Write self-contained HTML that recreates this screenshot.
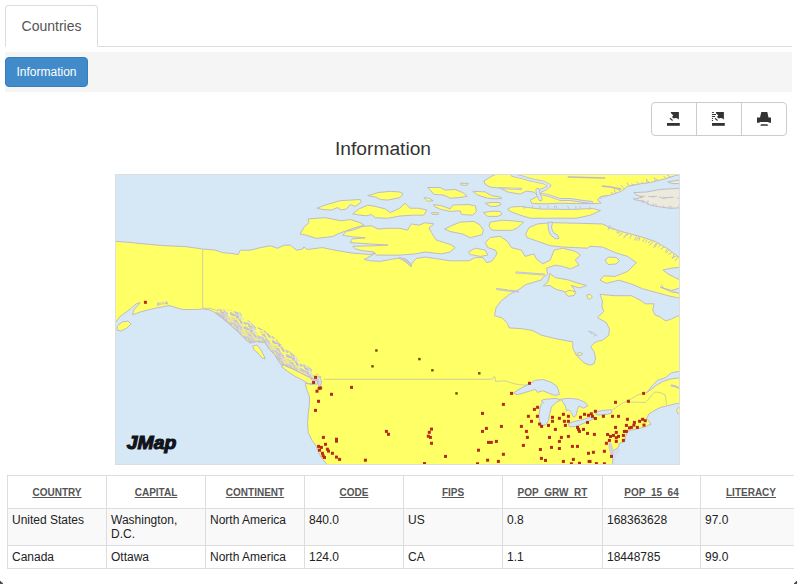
<!DOCTYPE html>
<html lang="en">
<head>
<meta charset="utf-8">
<title>Countries</title>
<style>
*{box-sizing:border-box}
html,body{margin:0;padding:0;background:#fff}
body{width:797px;height:584px;position:relative;overflow:hidden;font-family:"Liberation Sans",Arial,Helvetica,sans-serif;font-size:14px;line-height:20px;color:#333}
.tabline{position:absolute;left:5px;top:46px;width:787px;height:1px;background:#ddd}
.tab{position:absolute;left:5px;top:5px;width:93px;height:42px;border:1px solid #ddd;border-bottom-color:#fff;border-radius:4px 4px 0 0;background:#fff;color:#555;text-align:center;padding-top:10px;font-size:14px;line-height:20px}
.bar{position:absolute;left:5px;top:52px;width:787px;height:40px;background:#f5f5f5}
.btn-info{position:absolute;left:5px;top:57px;width:83px;height:30px;background:#428bca;border:1px solid #357ebd;border-radius:4px;color:#fff;font-size:12px;line-height:18px;padding-top:5px;text-align:center}
.grp{position:absolute;left:651px;top:102px;width:136px;height:34px;border:1px solid #ccc;border-radius:4px;background:#fff}
.grp i{position:absolute;top:0;width:1px;height:32px;background:#ccc}
.title{position:absolute;left:283px;top:137px;width:200px;text-align:center;font-size:19.2px;line-height:24px;color:#333;white-space:nowrap}
.map{position:absolute;left:115px;top:174px;width:565px;height:291px;border:1px solid #ddd;background:#d7e9f7;overflow:hidden}
.map svg{position:absolute;left:0;top:0}
.tw{position:absolute;left:7px;top:475px;width:787px;height:100px;overflow:hidden}
.tw table{position:absolute;left:0;top:0}
table{border-collapse:collapse;width:795px;table-layout:fixed;font-size:12px;line-height:14px;color:#222}
th,td{border:1px solid #ddd;padding:4px;vertical-align:top;text-align:left;overflow:hidden}
th{height:33px;padding-top:2px !important;font-size:10px;font-weight:bold;color:#555;text-decoration:underline;text-align:center;vertical-align:middle;padding:0}
tr.odd td{background:#f9f9f9}
.c1,.c2{position:absolute;bottom:0;width:3px;height:3px;overflow:hidden}
.c1{left:0}.c2{right:0}
.c1:before,.c2:before{content:"";position:absolute;width:12px;height:12px;border-radius:6px;box-shadow:0 0 0 6px #4a4d52;}
.c1:before{left:0;top:-9px}.c2:before{right:0;top:-9px}
</style>
</head>
<body>
<div class="tabline"></div>
<div class="tab">Countries</div>
<div class="bar"></div>
<div class="btn-info">Information</div>
<div class="grp"><i style="left:44px"></i><i style="left:89px"></i>
<svg width="134" height="32" viewBox="652 103 134 32" style="position:absolute;left:0;top:0">
<g fill="#333">
<rect x="667" y="123" width="12.8" height="2.8"/>
<polygon points="670.7,112 678.9,112 678.9,119.6 677.1,118.2 675.2,118 673.7,118.5 672,116.9 673.3,115.2 671.4,113.7"/>
<line x1="669.9" y1="118.3" x2="672.6" y2="120.5" stroke="#333" stroke-width="1.1"/>
<rect x="712" y="123" width="12.8" height="2.8"/>
<polygon points="715.7,112 723.9,112 723.9,119.6 722.1,118.2 720.2,118 718.7,118.5 717,116.9 718.3,115.2 716.4,113.7"/>
<line x1="714.9" y1="118.3" x2="717.6" y2="120.5" stroke="#333" stroke-width="1.1"/>
<rect x="711.9" y="112" width="2.1" height="0.9"/><rect x="711.9" y="114" width="4.1" height="1"/><rect x="711.9" y="116" width="3.2" height="1"/><rect x="711.9" y="118" width="1.1" height="1"/><rect x="711.9" y="120" width="1.1" height="1"/>
<polygon points="761.3,112 767.3,112 768.5,117.5 771,117.5 771,122.8 768.6,122.8 768.6,121.9 759.6,121.9 759.6,122.8 757,122.8 757,117.5 760,117.5"/>
<polygon points="761,124.3 767.4,124.3 768.2,125.8 760.3,125.8"/>
</g></svg>
</div>
<div class="title">Information</div>
<div class="map">
<svg width="563" height="289" viewBox="116 175 563 289"><rect x="110" y="170" width="580" height="300" fill="#d6e8f6"/>
<polygon points="110,241.4 116,241.4 130,242.4 145,244 165,245.7 185,246.5 202.5,249 215,250 222.5,252.7 231.3,253.4 238.2,254.6 240.1,250.2
250.1,250.2 260.2,247.7 270.2,245.8 277.7,248.3 284,245.2 290.3,245.2 296.6,250.2 302.8,249 303.8,247 307.5,249.5 315,248.5
322.6,247.6 331.4,249.5 341.4,251.3 352.7,253.2 362.7,253.9 370.3,254.5 375.3,253.2 367.8,257.6 364,259.5 370.3,260.8 380.3,261.4
390.3,259.5 400,258 406,259 409,262 411,265 413,262 416.3,258.5 425.1,257 437.6,258.9 450.2,260.8 469,260.8 475.3,257.6 482.8,257.6
486.6,262.6 491.6,261.4 495.4,256.4 497,253 495.4,250.1 487.8,247.6 485.3,242.6 490.3,237.5 500,236.3 507.5,241.3 511.3,247.6
521.3,250.1 525.1,256.4 533.9,253.9 536.4,258.9 542.7,263.9 550.2,260.1 552.7,253.9 554,250.1 562.7,248.2 575.3,251.3 580.3,255.1
575.3,260.1 579,265.2 570.3,268.9 562.7,266.4 555.2,265.2 546.4,268.3 547.7,273.9 542.7,277.7 541.8,279.8 525.5,284.7 518.9,289.6
509.2,294.5 501,301 496.1,307.5 494.5,315.7 502.6,318.1 507.5,323.8 509.2,327.9 522.2,328.7 532,330.4 541.8,335.3 554.8,338.5
567.9,341 572.8,341.8 572.8,348.3 576,354.8 584.2,363 590,365.2 594,363.8 595.6,358.1 594,351.6 590.7,346.7 594,343.4 597.5,341.3
602.5,340.2 608.8,335.2 609.4,328.9 606.3,322.6 597.5,317.6 603.8,311.3 601.9,306.3 602.5,301.3 600,294.4 615.1,295.7 631.4,295.7
640.2,300.1 645.2,303.8 654,303.8 652.7,310.1 655.2,315.1 660.3,317 665.3,320.8 670.3,319.5 676.6,316.4 685,314.5
685,371.4 679.3,371.4 671.6,372.7 665.3,377.7 657.8,380.2 652.7,385.2 646.5,392.8 650.2,390.2 656.5,385.2 662.8,381.5 670.3,379 685,377.1
685,402.5 675.3,403.8 667.8,405.7 660.3,407.5 655.2,410.1 649,413.8 646.5,418.8 649,421 651,424.5 648.5,425 646.5,426.4 640.2,428.2 632,430 627.4,431.6
625.2,437.5 624.5,441.9 619.3,443.4 618.6,447.1 615.6,449.3 613.4,450 612.7,454.5 612.7,464 612.7,470
326.4,470 326.4,463.8 321.4,457.7 318.2,451.5 316.3,446.4 312,440.2 308.2,432.6 307.6,422.6 308.2,413.8 309.4,405 309.5,396.5 307,390.2 305.2,383.3
312,384.5 317.5,384 317.5,379
312,376.5 303,372.5 293,367.5 285,363.5 280,361 276.3,357.6 275.2,355.2 270,350 265,342.5 256.4,341.4 250,343 243.9,337.7 237.6,331.4 230,324.5 222.5,318.2 215,312.6
210.4,310.1 202.8,308.8 197.8,309.5 190.3,309.5 182.8,309.5 177.7,308.2 170.2,305.7 165,306.3 160,307.3 155.2,308.2 147.6,310.1 140.1,312
132.6,314.9 133.8,310 137.6,305.7 140,302.5 136.3,303.8 131.3,308.2 126.3,312 120,316.4 116,322 110,322" fill="#ffff66" stroke="#bfbcc4" stroke-width="1.0" stroke-linejoin="round" />
<polygon points="117.5,326 122,322 128,321 131,324 127,328 121,331 117,330" fill="#ffff66" stroke="#bfbcc4" stroke-width="1.0" stroke-linejoin="round" />
<polygon points="252.6,346 257,345 261,350 264,356 265,359 262,358 258,353 254,350" fill="#ffff66" stroke="#bfbcc4" stroke-width="1.0" stroke-linejoin="round" />
<polygon points="281.3,366.5 287.6,371.4 295.1,376.4 302.6,380.2 307.7,383.3 313.3,383.5 312,380 310.2,377.6 302.6,373.9 292.6,368.9 283.8,365.1" fill="#ffff66" stroke="#bfbcc4" stroke-width="1.0" stroke-linejoin="round" />
<polygon points="300,234 303.8,227.7 308.8,222.7 308.2,218.9 325.1,217.7 341.4,220.8 350.2,219.5 360.2,222.7 364,225.2 355.2,227.7 347.7,230.2 337.6,234 332.6,236.5 316.3,238.4 306.3,235.2" fill="#ffff66" stroke="#bfbcc4" stroke-width="1.0" stroke-linejoin="round" />
<polygon points="316.9,208.2 325.1,205.1 340.2,200.7 360.2,199.5 361.5,202 355.2,206.4 350.2,204.5 346.4,208.9 341.4,210.1 337.6,207.6 331.4,210.1 322.6,209.5" fill="#ffff66" stroke="#bfbcc4" stroke-width="1.0" stroke-linejoin="round" />
<polygon points="352.7,213.9 359,208.9 367.8,205.1 375.3,206.4 385.3,208.9 390.3,212.6 400,208 405,203.2 410,208.2 418.8,208.2 427,210.1 423.8,215.2 412.5,215.2 400,216 387.8,218.3 375.3,217.7 371.5,214.5 366.5,215.8 360.2,215.2" fill="#ffff66" stroke="#bfbcc4" stroke-width="1.0" stroke-linejoin="round" />
<polygon points="367.8,195.7 377.8,192.6 390.3,191.3 400,192 403,194 400,197.6 387.8,200.1 380.3,199.5 375.3,197" fill="#ffff66" stroke="#bfbcc4" stroke-width="1.0" stroke-linejoin="round" />
<polygon points="427.6,187.5 440.2,187.5 445.2,190.1 455.2,189.4 462.7,192.6 467.1,196.3 459,197.6 450.2,198.2 443.9,195.1 433.9,194.4 431.4,191.3" fill="#ffff66" stroke="#bfbcc4" stroke-width="1.0" stroke-linejoin="round" />
<polygon points="460.2,183.2 468.4,183.5 467,185.3 461,185" fill="#ffff66" stroke="#bfbcc4" stroke-width="1.0" stroke-linejoin="round" />
<polygon points="423.8,197.6 428.9,198.2 433.2,200.7 427.6,201.3" fill="#ffff66" stroke="#bfbcc4" stroke-width="1.0" stroke-linejoin="round" />
<polygon points="433.2,204.5 441.4,205.7 450.2,208.9 452.7,205.1 467.8,204.5 475.3,205.7 476.5,211.4 472.8,215.2 461.5,214.5 460.2,210.8 450.2,211.4 441.4,209.5 435.1,207" fill="#ffff66" stroke="#bfbcc4" stroke-width="1.0" stroke-linejoin="round" />
<polygon points="431.4,212.6 438.9,212.9 438,214.5 432,214.3" fill="#ffff66" stroke="#bfbcc4" stroke-width="1.0" stroke-linejoin="round" />
<polygon points="444.5,229 452.7,225.2 460.2,222.1 474,221.4 480.3,225.2 483.4,230.2 482.2,234.6 470.3,237.7 462.7,234 450.2,231.5" fill="#ffff66" stroke="#bfbcc4" stroke-width="1.0" stroke-linejoin="round" />
<polygon points="342.7,235.2 346.4,231.3 352.7,230.2 362.7,226.4 371.5,225.8 377.8,229 387.8,228.3 400,228.3 407.5,230.2 411.3,223.9 418.8,225.2 425.1,222.7 433.9,223.9 428.9,228 431.4,232.5 436.4,240.1 450.2,244.4 455.2,247.6 450.2,252 441.4,253.9 425.1,252 415.1,253.9 400,255.1 387.8,255.1 376.5,255.1 374,252 362.7,250.7 355.2,248.8 352.7,246.3 375,245.8 388,245 375,244.3 350.2,242.6 352,239 365.2,237.8 352,236.8" fill="#ffff66" stroke="#bfbcc4" stroke-width="1.0" stroke-linejoin="round" />
<polygon points="468.4,252 475.3,248.2 485.3,250.1 487.8,255.1 480.3,256.4 470.3,254.5" fill="#ffff66" stroke="#bfbcc4" stroke-width="1.0" stroke-linejoin="round" />
<polygon points="490,222.2 502.1,220.2 512.5,220.8 523.8,222.1 517.6,227.7 512.5,230.2 502.1,230.4 492,230.2 489,226.2" fill="#ffff66" stroke="#bfbcc4" stroke-width="1.0" stroke-linejoin="round" />
<polygon points="483.4,212.6 492,211.2 500,211.4 502,214 498,216.4 487.8,216.4" fill="#ffff66" stroke="#bfbcc4" stroke-width="1.0" stroke-linejoin="round" />
<polygon points="485.3,203.2 493,202.4 500,202.6 501,204.5 496,206.4 490.3,206.4" fill="#ffff66" stroke="#bfbcc4" stroke-width="1.0" stroke-linejoin="round" />
<polygon points="472.8,191.3 485.3,191.9 491.6,195.7 500,197 502,198.5 495,198.8 487.8,198.2 477.8,195.1" fill="#ffff66" stroke="#bfbcc4" stroke-width="1.0" stroke-linejoin="round" />
<polygon points="484.1,181.3 492,177.5 497,180 492,186 487.8,185.7" fill="#ffff66" stroke="#bfbcc4" stroke-width="1.0" stroke-linejoin="round" />
<polygon points="507.5,209.5 511.3,207 520.2,206.5 540.2,209 570.4,209.5 592.4,208.5 600.5,210.5 590.4,215.2 576.4,218.2 550.3,218.2 530.2,218.2 520.2,215.2 512.1,212.2" fill="#ffff66" stroke="#bfbcc4" stroke-width="1.0" stroke-linejoin="round" />
<polygon points="484,181 488,178.5 492,176 497,174 504.1,170 700,170 675.3,175.6 665.3,178.8 650.2,182.5 640.2,183.8 627.6,186.3 621.4,191.3 610.1,195.1 600,197 597.5,200.1 601.3,203 595,203.6 576.4,203.6 560.3,203.2 546.3,203.8 532.2,203.6 530.2,200.1 538.2,196.1 534.2,192.1 526.2,191.1 520.2,194.1 508.1,192.1 500.1,188.1 490,187.1 485,184" fill="#ffff66" stroke="#bfbcc4" stroke-width="1.0" stroke-linejoin="round" />
<polygon points="525.7,234 528.9,227.7 537.6,223.9 552.7,222.7 580.3,223.3 600,223.9 602.5,224 611.3,228.3 621.4,231.5 640.2,236.5 655.2,241.5 667.8,248.8 685,262 685,267 672,268 663,270 668,274 678,279 685,281 685,286 672,290.5 660,287 671.6,292 685,294 685,299 676.6,297.5 670.3,296.3 656.5,292.5 642.7,288.8 631.4,284 618.9,280.2 606.3,283.3 600,280.2 603.8,275.8 615.1,276.4 627.6,271.4 636.4,262.6 627.6,256.4 615.1,252.6 602.5,247 590,246.3 587.8,248.2 575.3,247.6 562.7,247 550.2,245.7 537.6,241.3 527,237.5" fill="#ffff66" stroke="#bfbcc4" stroke-width="1.0" stroke-linejoin="round" />
<polygon points="605,260 609,257 616,257.5 619.5,260.5 616,264 608,264.5" fill="#ffff66" stroke="#bfbcc4" stroke-width="1.0" stroke-linejoin="round" />
<polygon points="549.9,273.3 555.2,277.7 567.9,279.8 577.7,283.1 586.6,285.5 579.3,287.9 571.1,285.5 574,289 575.3,292.8 567.8,295.3 564,291.5 555.2,289 549.9,285.5 543.4,286 548.3,281.4" fill="#ffff66" stroke="#bfbcc4" stroke-width="1.0" stroke-linejoin="round" />
<polygon points="564.6,292 570,290.4 576,292 574,295.5 568,296.3" fill="#ffff66" stroke="#bfbcc4" stroke-width="1.0" stroke-linejoin="round" />
<polygon points="587,295 590,294.3 592.3,297 590,299.4 587.5,298" fill="#ffff66" stroke="#bfbcc4" stroke-width="1.0" stroke-linejoin="round" />
<polygon points="576.9,353.5 580,352.4 582.6,354 580,355.6 577.5,355.2" fill="#ffff66" stroke="#bfbcc4" stroke-width="1.0" stroke-linejoin="round" />
<polygon points="685,407 678.5,407.3 676.6,410.5 678,413.8 685,413.8" fill="#ffff66" stroke="#bfbcc4" stroke-width="1.0" stroke-linejoin="round" />
<polygon points="609.5,442 611.5,444 612.5,449 612.7,455 611,455 609.5,450 608.8,445" fill="#d6d0e6" stroke="#bfbcc4" stroke-width="0.5" stroke-linejoin="round" />
<polygon points="613,451 616,450 619,447.5 619.5,451 616,456 613,462" fill="#d4dcf2" stroke="none" stroke-width="1.0" stroke-linejoin="round" />
<polygon points="633.9,192.6 646.5,192 660.3,189.4 685,188 685,207.6 670.3,208.3 660.3,207 650.2,205.1 644,201.4 633.9,199.5 642.7,197 636,195" fill="#eceadc" stroke="#bfbcc4" stroke-width="1.0" stroke-linejoin="round" />
<polygon points="667.8,181.9 685,179 685,183.5 672,183.6" fill="#eceadc" stroke="#bfbcc4" stroke-width="1.0" stroke-linejoin="round" />
<polygon points="513.3,393.1 520.1,388.6 529.1,384.1 535.2,380.3 542.7,379.5 550.2,381.8 556.3,385.6 558.5,390.1 559.3,394.6 554.8,395.4 548.7,393.1 542.7,390.8 537.4,392.4 535.2,389.3 530.6,390.8 523.1,393.1 517.1,394.6" fill="#d6e8f6" stroke="#bfbcc4" stroke-width="1.0" stroke-linejoin="round" />
<polygon points="542.7,399.9 547.2,399.1 556.3,398.4 560.8,399.9 556.3,402.2 551.7,406.7 549.5,414.2 548.7,420.2 545.7,424.8 541.9,425.5 539.7,421.8 538.9,415.7 539.7,409.7 541.2,403.7 543.5,402.5 541,401" fill="#d6e8f6" stroke="#bfbcc4" stroke-width="1.0" stroke-linejoin="round" />
<polygon points="560.8,399.1 568.3,398.4 577.4,399.1 584.9,402.2 587.9,405.9 583.4,408.2 578.9,405.9 577.4,409.7 575.9,415.7 573.6,417.2 571.3,412.7 568.3,409.7 566.5,411 565.3,405.9 563,402.2" fill="#d6e8f6" stroke="#bfbcc4" stroke-width="1.0" stroke-linejoin="round" />
<polygon points="568.3,424 572.8,421.8 580.4,420.2 587.9,418 594,416.5 594.5,418 589.4,421 581.9,424 575.9,426.3 569.8,427" fill="#d6e8f6" stroke="#bfbcc4" stroke-width="1.0" stroke-linejoin="round" />
<polygon points="595.5,412 603,410.4 611.3,409.7 612,412.7 607.5,414.2 598.5,415 595.5,414" fill="#d6e8f6" stroke="#bfbcc4" stroke-width="1.0" stroke-linejoin="round" />
<polygon points="548,222.2 552.5,222.2 551.5,228 553.5,232.5 558,235.5 559,238.5 555.5,238.8 550.5,235 548.3,229" fill="#d6e8f6" stroke="#bfbcc4" stroke-width="1.0" stroke-linejoin="round" />
<polygon points="317.7,379.5 320,378 321.5,381 320.5,386.4 318.5,386 319,382" fill="#d6e8f6" stroke="#bfbcc4" stroke-width="1.0" stroke-linejoin="round" />
<polyline points="202.7,249 202.7,308.3 210,308.3 218,311" fill="none" stroke="#bdbdb0" stroke-width="0.7" stroke-linejoin="round"/>
<polyline points="324,379.3 490,379.3 492.5,379 493.8,376.5 495,377 495.6,381.5 505,380.8 515.1,384 523.9,385.2 529,384.5" fill="none" stroke="#bdbdb0" stroke-width="0.7" stroke-linejoin="round"/>
<polyline points="611.3,410.8 621.3,403.8 631.4,398.8 637.7,395 646.5,392.8" fill="none" stroke="#bdbdb0" stroke-width="0.7" stroke-linejoin="round"/>
<polyline points="627.6,401.9 645.2,402.5 649,398.8 651.5,395 655,392 660,392.5 665.3,395 666.5,405" fill="none" stroke="#bdbdb0" stroke-width="0.7" stroke-linejoin="round"/>
<polyline points="512.5,175 523,177.5 531.4,180 543.9,182.5 549.5,185.5 546,188.5 540,191" fill="none" stroke="#bfbcc4" stroke-width="3.6" stroke-linejoin="round" stroke-linecap="round"/>
<polyline points="512.5,175 523,177.5 531.4,180 543.9,182.5 549.5,185.5 546,188.5 540,191" fill="none" stroke="#d6e8f6" stroke-width="2.0" stroke-linejoin="round" stroke-linecap="round"/>
<polyline points="537.5,190 538.5,195 540.5,199" fill="none" stroke="#bfbcc4" stroke-width="4.2" stroke-linejoin="round" stroke-linecap="round"/>
<polyline points="537.5,190 538.5,195 540.5,199" fill="none" stroke="#d6e8f6" stroke-width="2.6" stroke-linejoin="round" stroke-linecap="round"/>
<polyline points="541.4,194 550,196 560,199.5 570.3,199.5 580,201 592,202.5" fill="none" stroke="#bfbcc4" stroke-width="2.8" stroke-linejoin="round" stroke-linecap="round"/>
<polyline points="541.4,194 550,196 560,199.5 570.3,199.5 580,201 592,202.5" fill="none" stroke="#d6e8f6" stroke-width="1.2" stroke-linejoin="round" stroke-linecap="round"/>
<polyline points="500,188 510,188.5 521,188.8" fill="none" stroke="#bfbcc4" stroke-width="2.2" stroke-linejoin="round" stroke-linecap="round"/>
<polyline points="500,188 510,188.5 521,188.8" fill="none" stroke="#d6e8f6" stroke-width="0.6" stroke-linejoin="round" stroke-linecap="round"/>
<polyline points="568.4,177 585,177.5 604.5,178" fill="none" stroke="#bfbcc4" stroke-width="1.6" stroke-linejoin="round" stroke-linecap="round"/>
<polyline points="602.5,186.1 611,187 620.6,189.1" fill="none" stroke="#bfbcc4" stroke-width="1.6" stroke-linejoin="round" stroke-linecap="round"/>
<polyline points="671.5,385.5 676,386.5 680,388.5" fill="none" stroke="#bfbcc4" stroke-width="1.9000000000000001" stroke-linejoin="round" stroke-linecap="round"/>
<polyline points="671.5,385.5 676,386.5 680,388.5" fill="none" stroke="#d6e8f6" stroke-width="0.3" stroke-linejoin="round" stroke-linecap="round"/>
<polyline points="400,258 404,260 408,263 411,266" fill="none" stroke="#bfbcc4" stroke-width="2.2" stroke-linejoin="round" stroke-linecap="round"/>
<polyline points="400,258 404,260 408,263 411,266" fill="none" stroke="#d6e8f6" stroke-width="0.6" stroke-linejoin="round" stroke-linecap="round"/>
<polyline points="516.3,272.5 530,273.5 543.9,274.5" fill="none" stroke="#bfbcc4" stroke-width="2.1" stroke-linejoin="round" stroke-linecap="round"/>
<polyline points="516.3,272.5 530,273.5 543.9,274.5" fill="none" stroke="#d6e8f6" stroke-width="0.5" stroke-linejoin="round" stroke-linecap="round"/>
<polyline points="497,289 508,290.5 518,291.5" fill="none" stroke="#bfbcc4" stroke-width="2.0" stroke-linejoin="round" stroke-linecap="round"/>
<polyline points="497,289 508,290.5 518,291.5" fill="none" stroke="#d6e8f6" stroke-width="0.4" stroke-linejoin="round" stroke-linecap="round"/>
<path d="M609.6,225.5l-1.5,3.8M611.6,226.7l-2.4,2.5M614.2,228.2l-1.7,1.9M617.8,230.4l-0.8,2.6M620.4,231.9l-2.4,1.4M622.6,232.8l-3.7,3.2M626.6,233.9l-2.9,4.0M628.0,234.3l-2.9,1.5M631.2,235.1l-1.1,3.1M636.2,236.4l-1.6,3.6M638.6,237.1l-2.2,3.2M639.8,237.4l-0.9,2.9M644.5,239.0l-2.0,2.6M647.1,239.9l-2.0,2.5M650.6,241.0l-2.5,1.9M652.9,241.8l-3.2,3.4M656.2,243.1l-2.4,4.3M657.2,243.6l-2.6,3.5M660.1,245.0l-1.7,2.0M664.2,247.0l-3.3,2.1M667.5,248.7l-2.2,3.6M669.2,250.0l-2.6,2.5M672.1,252.5l-3.4,1.4M673.9,254.2l-1.2,4.1M676.2,256.2l-4.3,1.6M677.7,257.5l-2.4,3.4" stroke="#c6c0cf" stroke-width="1" fill="none" stroke-linecap="round"/>
<path d="M675.2,175.6l-1.4,-1.8M670.4,177.0l-3.1,-1.7M665.9,178.2l-2.1,-1.8M658.3,180.3l-2.5,-1.4M655.3,181.1l-0.9,-3.5M649.5,182.6l-2.1,-1.9M647.3,183.0l-0.9,-3.8M643.7,183.6l-2.0,-1.4M638.8,184.4l-1.9,-2.5M634.2,185.2l-2.6,-1.2M629.2,186.0l-2.1,-3.3M623.7,188.3l-1.9,-2.6M619.7,190.3l-3.3,-1.8M615.2,192.5l-0.9,-3.5M612.7,193.8l-1.5,-1.6M607.5,196.1l-1.9,-1.0M605.1,197.1l-2.2,-1.5M601.5,198.5l-2.1,-1.0" stroke="#c6c0cf" stroke-width="1" fill="none" stroke-linecap="round"/>
<path d="M634.3,199.7l-0.6,-1.7M642.1,202.3l-0.2,-2.0M643.8,202.9l-0.9,-2.2M647.6,204.2l0.4,-3.5M653.6,205.6l-0.5,-1.8M656.5,206.1l-0.8,-2.0M664.4,207.4l-1.0,-1.5M669.5,208.2l-0.4,-2.0M672.3,208.1l-1.7,-2.0M678.9,207.6l0.4,-2.9" stroke="#c6c0cf" stroke-width="1" fill="none" stroke-linecap="round"/>
<path d="M641.3,196.1l3.5,0.1M648.6,196.4l5.3,0.6M651.4,196.6l5.4,-0.4M659.4,197.0l5.2,1.7M663.5,197.2l3.6,0.9M666.9,197.4l3.1,0.0M669.4,197.5l3.8,-0.1M677.5,197.9l4.0,1.6" stroke="#c6c0cf" stroke-width="1" fill="none" stroke-linecap="round"/>
<path d="M663.6,288.2l-2.0,-3.4M665.2,288.7l-2.4,-0.6M668.4,289.8l-3.2,-0.8M674.9,292.2l-1.9,-2.3M677.7,293.4l-1.4,-1.6" stroke="#c6c0cf" stroke-width="1" fill="none" stroke-linecap="round"/>
<path d="M524.6,206.0l-0.6,2.6M532.3,206.0l0.3,1.7M539.5,206.0l0.9,2.5M547.8,206.0l0.6,2.0M554.6,206.0l-0.1,1.8M555.9,206.0l1.4,2.5M567.7,206.3l1.4,2.4M575.9,206.5l0.0,2.0M579.8,206.7l0.8,1.3M589.8,207.0l0.0,2.3" stroke="#c6c0cf" stroke-width="1" fill="none" stroke-linecap="round"/>
<path d="M157.3,305.6l0.7,-2.7M158.6,305.1l-0.3,-1.9M159.2,304.9l-0.2,-2.4M160.6,304.5l0.4,-1.7M162.9,304.0l0.2,-2.2M163.9,304.0l1.9,-1.0M165.9,304.0l0.8,-2.1M166.8,304.0l-1.0,-1.9M167.8,304.0l-1.3,-2.3" stroke="#c6c0cf" stroke-width="1" fill="none" stroke-linecap="round"/>
<path d="M588.2,331.1l2.0,0.9M589.8,331.9l1.9,-0.0M590.9,332.5l0.3,1.3M592.1,333.0l1.5,-0.4M593.5,333.7l1.7,1.0M594.6,334.3l-0.3,1.8M595.6,334.8l1.6,0.9" stroke="#c6c0cf" stroke-width="1" fill="none" stroke-linecap="round"/>
<clipPath id="bandclip"><polygon points="215.0,312.6 222.5,318.2 230.0,324.5 237.6,331.4 243.9,337.7 250.0,343.0 256.4,341.4 265.0,342.5 270.0,350.0 275.2,355.2 276.3,357.6 281.3,365.1 283.8,365.1 292.6,368.9 302.6,373.9 310.2,377.6 317.0,381.0 322.0,377.0 316.0,372.0 306.4,365.0 299.0,359.0 291.3,352.5 285.3,349.0 275.2,338.0 265.2,331.0 252.6,323.9 240.0,312.6 227.5,309.5 218.0,309.0"/></clipPath>
<pattern id="arch" width="14" height="14" patternUnits="userSpaceOnUse"><rect width="14" height="14" fill="#ffff66"/><line x1="9.7" y1="6.3" x2="12.4" y2="9.0" stroke="#d6e8f6" stroke-width="1.4" stroke-linecap="round" opacity="0.9"/><line x1="-0.8" y1="3.6" x2="0.0" y2="7.1" stroke="#c2bace" stroke-width="0.8" stroke-linecap="round" opacity="0.9"/><line x1="13.2" y1="3.6" x2="14.0" y2="7.1" stroke="#c2bace" stroke-width="0.8" stroke-linecap="round" opacity="0.9"/><line x1="6.2" y1="1.0" x2="9.1" y2="1.9" stroke="#d6e8f6" stroke-width="1.4" stroke-linecap="round" opacity="0.9"/><line x1="2.2" y1="10.0" x2="5.6" y2="11.4" stroke="#d4cce0" stroke-width="0.9" stroke-linecap="round" opacity="0.9"/><line x1="-0.7" y1="5.6" x2="-0.0" y2="9.0" stroke="#c2bace" stroke-width="1.0" stroke-linecap="round" opacity="0.9"/><line x1="13.3" y1="5.6" x2="14.0" y2="9.0" stroke="#c2bace" stroke-width="1.0" stroke-linecap="round" opacity="0.9"/><line x1="7.2" y1="4.7" x2="9.9" y2="6.5" stroke="#c2bace" stroke-width="1.1" stroke-linecap="round" opacity="0.9"/><line x1="6.2" y1="0.3" x2="7.6" y2="2.3" stroke="#c2bace" stroke-width="1.5" stroke-linecap="round" opacity="0.9"/><line x1="6.2" y1="14.3" x2="7.6" y2="16.3" stroke="#c2bace" stroke-width="1.5" stroke-linecap="round" opacity="0.9"/><line x1="11.0" y1="-0.4" x2="12.0" y2="0.2" stroke="#d6e8f6" stroke-width="0.9" stroke-linecap="round" opacity="0.9"/><line x1="11.0" y1="13.6" x2="12.0" y2="14.2" stroke="#d6e8f6" stroke-width="0.9" stroke-linecap="round" opacity="0.9"/><line x1="1.8" y1="5.9" x2="3.6" y2="5.8" stroke="#c2bace" stroke-width="1.4" stroke-linecap="round" opacity="0.9"/><line x1="8.0" y1="9.8" x2="10.9" y2="10.6" stroke="#c2bace" stroke-width="0.8" stroke-linecap="round" opacity="0.9"/><line x1="-0.9" y1="8.9" x2="0.8" y2="5.7" stroke="#c2bace" stroke-width="1.4" stroke-linecap="round" opacity="0.9"/><line x1="13.1" y1="8.9" x2="14.8" y2="5.7" stroke="#c2bace" stroke-width="1.4" stroke-linecap="round" opacity="0.9"/><line x1="6.4" y1="4.7" x2="6.8" y2="6.5" stroke="#c2bace" stroke-width="1.1" stroke-linecap="round" opacity="0.9"/><line x1="3.3" y1="1.5" x2="4.9" y2="1.9" stroke="#c2bace" stroke-width="0.9" stroke-linecap="round" opacity="0.9"/><line x1="10.6" y1="4.1" x2="12.5" y2="4.9" stroke="#c2bace" stroke-width="0.9" stroke-linecap="round" opacity="0.9"/><line x1="0.2" y1="10.3" x2="2.4" y2="11.3" stroke="#d4cce0" stroke-width="0.8" stroke-linecap="round" opacity="0.9"/><line x1="14.2" y1="10.3" x2="16.4" y2="11.3" stroke="#d4cce0" stroke-width="0.8" stroke-linecap="round" opacity="0.9"/><line x1="11.5" y1="6.1" x2="12.3" y2="8.1" stroke="#c2bace" stroke-width="1.3" stroke-linecap="round" opacity="0.9"/><line x1="-0.2" y1="4.8" x2="2.6" y2="4.2" stroke="#c2bace" stroke-width="1.0" stroke-linecap="round" opacity="0.9"/><line x1="13.8" y1="4.8" x2="16.6" y2="4.2" stroke="#c2bace" stroke-width="1.0" stroke-linecap="round" opacity="0.9"/><line x1="0.8" y1="1.8" x2="1.6" y2="3.4" stroke="#c2bace" stroke-width="0.8" stroke-linecap="round" opacity="0.9"/><line x1="14.8" y1="1.8" x2="15.6" y2="3.4" stroke="#c2bace" stroke-width="0.8" stroke-linecap="round" opacity="0.9"/><line x1="-2.2" y1="-1.8" x2="-0.7" y2="-0.9" stroke="#c2bace" stroke-width="1.1" stroke-linecap="round" opacity="0.9"/><line x1="-2.2" y1="12.2" x2="-0.7" y2="13.1" stroke="#c2bace" stroke-width="1.1" stroke-linecap="round" opacity="0.9"/><line x1="11.8" y1="-1.8" x2="13.3" y2="-0.9" stroke="#c2bace" stroke-width="1.1" stroke-linecap="round" opacity="0.9"/><line x1="11.8" y1="12.2" x2="13.3" y2="13.1" stroke="#c2bace" stroke-width="1.1" stroke-linecap="round" opacity="0.9"/><line x1="2.2" y1="6.2" x2="3.0" y2="10.1" stroke="#c2bace" stroke-width="0.9" stroke-linecap="round" opacity="0.9"/><line x1="-0.5" y1="4.3" x2="1.6" y2="4.8" stroke="#c2bace" stroke-width="1.1" stroke-linecap="round" opacity="0.9"/><line x1="13.5" y1="4.3" x2="15.6" y2="4.8" stroke="#c2bace" stroke-width="1.1" stroke-linecap="round" opacity="0.9"/><line x1="2.8" y1="7.1" x2="3.9" y2="7.7" stroke="#c2bace" stroke-width="0.7" stroke-linecap="round" opacity="0.9"/><line x1="0.3" y1="4.3" x2="1.9" y2="6.3" stroke="#d6e8f6" stroke-width="1.2" stroke-linecap="round" opacity="0.9"/><line x1="14.3" y1="4.3" x2="15.9" y2="6.3" stroke="#d6e8f6" stroke-width="1.2" stroke-linecap="round" opacity="0.9"/><line x1="-4.0" y1="-1.7" x2="-0.7" y2="0.5" stroke="#c2bace" stroke-width="1.3" stroke-linecap="round" opacity="0.9"/><line x1="-4.0" y1="12.3" x2="-0.7" y2="14.5" stroke="#c2bace" stroke-width="1.3" stroke-linecap="round" opacity="0.9"/><line x1="10.0" y1="-1.7" x2="13.3" y2="0.5" stroke="#c2bace" stroke-width="1.3" stroke-linecap="round" opacity="0.9"/><line x1="10.0" y1="12.3" x2="13.3" y2="14.5" stroke="#c2bace" stroke-width="1.3" stroke-linecap="round" opacity="0.9"/><line x1="9.0" y1="0.6" x2="11.9" y2="0.8" stroke="#d6e8f6" stroke-width="1.3" stroke-linecap="round" opacity="0.9"/><line x1="9.0" y1="14.6" x2="11.9" y2="14.8" stroke="#d6e8f6" stroke-width="1.3" stroke-linecap="round" opacity="0.9"/><line x1="2.0" y1="7.3" x2="3.2" y2="10.5" stroke="#d6e8f6" stroke-width="1.2" stroke-linecap="round" opacity="0.9"/><line x1="-1.5" y1="9.6" x2="-0.5" y2="10.1" stroke="#c2bace" stroke-width="1.0" stroke-linecap="round" opacity="0.9"/><line x1="12.5" y1="9.6" x2="13.5" y2="10.1" stroke="#c2bace" stroke-width="1.0" stroke-linecap="round" opacity="0.9"/><line x1="1.5" y1="-2.3" x2="3.1" y2="0.0" stroke="#d6e8f6" stroke-width="1.1" stroke-linecap="round" opacity="0.9"/><line x1="1.5" y1="11.7" x2="3.1" y2="14.0" stroke="#d6e8f6" stroke-width="1.1" stroke-linecap="round" opacity="0.9"/><line x1="0.0" y1="-2.8" x2="1.9" y2="-1.0" stroke="#c2bace" stroke-width="0.8" stroke-linecap="round" opacity="0.9"/><line x1="0.0" y1="11.2" x2="1.9" y2="13.0" stroke="#c2bace" stroke-width="0.8" stroke-linecap="round" opacity="0.9"/><line x1="14.0" y1="-2.8" x2="15.9" y2="-1.0" stroke="#c2bace" stroke-width="0.8" stroke-linecap="round" opacity="0.9"/><line x1="14.0" y1="11.2" x2="15.9" y2="13.0" stroke="#c2bace" stroke-width="0.8" stroke-linecap="round" opacity="0.9"/><line x1="-3.7" y1="3.5" x2="-0.9" y2="5.1" stroke="#c2bace" stroke-width="1.3" stroke-linecap="round" opacity="0.9"/><line x1="10.3" y1="3.5" x2="13.1" y2="5.1" stroke="#c2bace" stroke-width="1.3" stroke-linecap="round" opacity="0.9"/><line x1="-0.3" y1="6.9" x2="1.8" y2="9.0" stroke="#d6e8f6" stroke-width="1.2" stroke-linecap="round" opacity="0.9"/><line x1="13.7" y1="6.9" x2="15.8" y2="9.0" stroke="#d6e8f6" stroke-width="1.2" stroke-linecap="round" opacity="0.9"/><line x1="9.0" y1="1.1" x2="11.8" y2="2.6" stroke="#c2bace" stroke-width="1.2" stroke-linecap="round" opacity="0.9"/><line x1="0.2" y1="0.8" x2="1.8" y2="3.4" stroke="#d6e8f6" stroke-width="0.9" stroke-linecap="round" opacity="0.9"/><line x1="0.2" y1="14.8" x2="1.8" y2="17.4" stroke="#d6e8f6" stroke-width="0.9" stroke-linecap="round" opacity="0.9"/><line x1="14.2" y1="0.8" x2="15.8" y2="3.4" stroke="#d6e8f6" stroke-width="0.9" stroke-linecap="round" opacity="0.9"/><line x1="14.2" y1="14.8" x2="15.8" y2="17.4" stroke="#d6e8f6" stroke-width="0.9" stroke-linecap="round" opacity="0.9"/><line x1="7.2" y1="6.5" x2="10.7" y2="7.7" stroke="#c2bace" stroke-width="1.5" stroke-linecap="round" opacity="0.9"/><line x1="-0.9" y1="0.2" x2="0.6" y2="3.9" stroke="#c2bace" stroke-width="0.9" stroke-linecap="round" opacity="0.9"/><line x1="-0.9" y1="14.2" x2="0.6" y2="17.9" stroke="#c2bace" stroke-width="0.9" stroke-linecap="round" opacity="0.9"/><line x1="13.1" y1="0.2" x2="14.6" y2="3.9" stroke="#c2bace" stroke-width="0.9" stroke-linecap="round" opacity="0.9"/><line x1="13.1" y1="14.2" x2="14.6" y2="17.9" stroke="#c2bace" stroke-width="0.9" stroke-linecap="round" opacity="0.9"/><line x1="2.9" y1="-0.8" x2="3.8" y2="0.4" stroke="#c2bace" stroke-width="1.5" stroke-linecap="round" opacity="0.9"/><line x1="2.9" y1="13.2" x2="3.8" y2="14.4" stroke="#c2bace" stroke-width="1.5" stroke-linecap="round" opacity="0.9"/><line x1="1.9" y1="-2.5" x2="2.8" y2="0.4" stroke="#c2bace" stroke-width="1.4" stroke-linecap="round" opacity="0.9"/><line x1="1.9" y1="11.5" x2="2.8" y2="14.4" stroke="#c2bace" stroke-width="1.4" stroke-linecap="round" opacity="0.9"/><line x1="6.8" y1="0.3" x2="8.5" y2="2.0" stroke="#c2bace" stroke-width="0.8" stroke-linecap="round" opacity="0.9"/><line x1="6.8" y1="14.3" x2="8.5" y2="16.0" stroke="#c2bace" stroke-width="0.8" stroke-linecap="round" opacity="0.9"/><line x1="4.8" y1="4.4" x2="6.0" y2="1.4" stroke="#d6e8f6" stroke-width="0.8" stroke-linecap="round" opacity="0.9"/><line x1="-1.0" y1="10.0" x2="0.5" y2="8.5" stroke="#c2bace" stroke-width="1.5" stroke-linecap="round" opacity="0.9"/><line x1="13.0" y1="10.0" x2="14.5" y2="8.5" stroke="#c2bace" stroke-width="1.5" stroke-linecap="round" opacity="0.9"/></pattern>
<polygon points="215.0,312.6 222.5,318.2 230.0,324.5 237.6,331.4 243.9,337.7 250.0,343.0 256.4,341.4 265.0,342.5 270.0,350.0 275.2,355.2 276.3,357.6 281.3,365.1 283.8,365.1 292.6,368.9 302.6,373.9 310.2,377.6 317.0,381.0 322.0,377.0 316.0,372.0 306.4,365.0 299.0,359.0 291.3,352.5 285.3,349.0 275.2,338.0 265.2,331.0 252.6,323.9 240.0,312.6 227.5,309.5 218.0,309.0" fill="url(#arch)"/>
<polygon points="215.0,312.6 222.5,318.2 230.0,324.5 237.6,331.4 243.9,337.7 250.0,343.0 256.4,341.4 265.0,342.5 270.0,350.0 275.2,355.2 276.3,357.6 281.3,365.1 283.8,365.1 292.6,368.9 302.6,373.9 310.2,377.6 317.0,381.0 319.5,379.0 309.3,372.9 291.4,362.1 280.8,353.3 272.6,344.0 260.8,336.2 248.2,330.8 235.0,318.6 216.5,310.8" fill="#cfc8dc" opacity="0.4"/>
<polyline points="215.0,312.6 222.5,318.2 230.0,324.5 237.6,331.4 243.9,337.7 250.0,343.0 256.4,341.4 265.0,342.5 270.0,350.0 275.2,355.2 276.3,357.6 281.3,365.1 283.8,365.1 292.6,368.9 302.6,373.9 310.2,377.6 317.0,381.0" fill="none" stroke="#bfbcc4" stroke-width="1.0" stroke-linejoin="round"/>
<rect x="143.9" y="300.8" width="3" height="3" fill="#b52a18"/>
<rect x="314.1" y="375.8" width="3" height="3" fill="#b52a18"/>
<rect x="312.1" y="380.9" width="3" height="3" fill="#b52a18"/>
<rect x="317.7" y="386.8" width="3" height="3" fill="#b52a18"/>
<rect x="315.5" y="389.7" width="3" height="3" fill="#b52a18"/>
<rect x="319.1" y="386.5" width="3" height="3" fill="#b52a18"/>
<rect x="330.0" y="392.8" width="3" height="3" fill="#b52a18"/>
<rect x="350.0" y="385.9" width="3" height="3" fill="#b52a18"/>
<rect x="317.0" y="399.8" width="3" height="3" fill="#b52a18"/>
<rect x="314.0" y="408.9" width="3" height="3" fill="#b52a18"/>
<rect x="321.9" y="435.9" width="3" height="3" fill="#b52a18"/>
<rect x="335.0" y="437.7" width="3" height="3" fill="#b52a18"/>
<rect x="335.0" y="439.7" width="3" height="3" fill="#b52a18"/>
<rect x="324.0" y="442.8" width="3" height="3" fill="#b52a18"/>
<rect x="317.1" y="444.9" width="3" height="3" fill="#b52a18"/>
<rect x="319.9" y="445.9" width="3" height="3" fill="#b52a18"/>
<rect x="318.0" y="448.7" width="3" height="3" fill="#b52a18"/>
<rect x="320.9" y="451.8" width="3" height="3" fill="#b52a18"/>
<rect x="321.7" y="454.4" width="3" height="3" fill="#b52a18"/>
<rect x="323.0" y="456.0" width="3" height="3" fill="#b52a18"/>
<rect x="325.9" y="447.7" width="3" height="3" fill="#b52a18"/>
<rect x="327.0" y="449.6" width="3" height="3" fill="#b52a18"/>
<rect x="330.9" y="451.8" width="3" height="3" fill="#b52a18"/>
<rect x="335.0" y="455.6" width="3" height="3" fill="#b52a18"/>
<rect x="338.1" y="457.9" width="3" height="3" fill="#b52a18"/>
<rect x="363.9" y="458.7" width="3" height="3" fill="#b52a18"/>
<rect x="384.9" y="429.9" width="3" height="3" fill="#b52a18"/>
<rect x="387.0" y="432.8" width="3" height="3" fill="#b52a18"/>
<rect x="481.0" y="411.9" width="3" height="3" fill="#b52a18"/>
<rect x="430.0" y="427.6" width="3" height="3" fill="#b52a18"/>
<rect x="427.8" y="430.8" width="3" height="3" fill="#b52a18"/>
<rect x="426.8" y="434.7" width="3" height="3" fill="#b52a18"/>
<rect x="428.9" y="435.9" width="3" height="3" fill="#b52a18"/>
<rect x="430.0" y="441.8" width="3" height="3" fill="#b52a18"/>
<rect x="484.9" y="426.9" width="3" height="3" fill="#b52a18"/>
<rect x="481.0" y="429.9" width="3" height="3" fill="#b52a18"/>
<rect x="487.0" y="440.9" width="3" height="3" fill="#b52a18"/>
<rect x="477.0" y="448.7" width="3" height="3" fill="#b52a18"/>
<rect x="444.0" y="454.9" width="3" height="3" fill="#b52a18"/>
<rect x="486.1" y="458.7" width="3" height="3" fill="#b52a18"/>
<rect x="423.0" y="462.1" width="3" height="3" fill="#b52a18"/>
<rect x="476.0" y="462.3" width="3" height="3" fill="#b52a18"/>
<rect x="501.9" y="402.9" width="3" height="3" fill="#b52a18"/>
<rect x="536.1" y="405.8" width="3" height="3" fill="#b52a18"/>
<rect x="532.9" y="407.9" width="3" height="3" fill="#b52a18"/>
<rect x="526.9" y="414.8" width="3" height="3" fill="#b52a18"/>
<rect x="535.9" y="414.8" width="3" height="3" fill="#b52a18"/>
<rect x="530.0" y="419.8" width="3" height="3" fill="#b52a18"/>
<rect x="499.9" y="424.9" width="3" height="3" fill="#b52a18"/>
<rect x="519.9" y="424.9" width="3" height="3" fill="#b52a18"/>
<rect x="538.1" y="422.6" width="3" height="3" fill="#b52a18"/>
<rect x="540.1" y="424.9" width="3" height="3" fill="#b52a18"/>
<rect x="547.0" y="423.9" width="3" height="3" fill="#b52a18"/>
<rect x="551.0" y="415.8" width="3" height="3" fill="#b52a18"/>
<rect x="551.0" y="419.8" width="3" height="3" fill="#b52a18"/>
<rect x="557.9" y="416.8" width="3" height="3" fill="#b52a18"/>
<rect x="561.9" y="412.8" width="3" height="3" fill="#b52a18"/>
<rect x="566.9" y="414.8" width="3" height="3" fill="#b52a18"/>
<rect x="562.9" y="419.8" width="3" height="3" fill="#b52a18"/>
<rect x="566.9" y="419.8" width="3" height="3" fill="#b52a18"/>
<rect x="563.9" y="423.9" width="3" height="3" fill="#b52a18"/>
<rect x="579.0" y="415.8" width="3" height="3" fill="#b52a18"/>
<rect x="583.0" y="412.8" width="3" height="3" fill="#b52a18"/>
<rect x="587.0" y="413.8" width="3" height="3" fill="#b52a18"/>
<rect x="586.0" y="420.9" width="3" height="3" fill="#b52a18"/>
<rect x="576.0" y="425.9" width="3" height="3" fill="#b52a18"/>
<rect x="577.0" y="427.9" width="3" height="3" fill="#b52a18"/>
<rect x="578.0" y="429.9" width="3" height="3" fill="#b52a18"/>
<rect x="582.0" y="427.9" width="3" height="3" fill="#b52a18"/>
<rect x="586.0" y="431.9" width="3" height="3" fill="#b52a18"/>
<rect x="553.9" y="427.9" width="3" height="3" fill="#b52a18"/>
<rect x="524.9" y="429.9" width="3" height="3" fill="#b52a18"/>
<rect x="525.9" y="435.9" width="3" height="3" fill="#b52a18"/>
<rect x="548.0" y="435.9" width="3" height="3" fill="#b52a18"/>
<rect x="559.9" y="435.9" width="3" height="3" fill="#b52a18"/>
<rect x="566.9" y="434.9" width="3" height="3" fill="#b52a18"/>
<rect x="557.9" y="439.9" width="3" height="3" fill="#b52a18"/>
<rect x="494.9" y="439.9" width="3" height="3" fill="#b52a18"/>
<rect x="489.8" y="440.9" width="3" height="3" fill="#b52a18"/>
<rect x="521.9" y="443.9" width="3" height="3" fill="#b52a18"/>
<rect x="538.9" y="448.0" width="3" height="3" fill="#b52a18"/>
<rect x="550.0" y="445.9" width="3" height="3" fill="#b52a18"/>
<rect x="557.9" y="447.0" width="3" height="3" fill="#b52a18"/>
<rect x="570.9" y="444.9" width="3" height="3" fill="#b52a18"/>
<rect x="576.0" y="444.9" width="3" height="3" fill="#b52a18"/>
<rect x="587.0" y="451.8" width="3" height="3" fill="#b52a18"/>
<rect x="501.9" y="452.8" width="3" height="3" fill="#b52a18"/>
<rect x="496.9" y="459.9" width="3" height="3" fill="#b52a18"/>
<rect x="539.9" y="456.9" width="3" height="3" fill="#b52a18"/>
<rect x="544.0" y="458.9" width="3" height="3" fill="#b52a18"/>
<rect x="561.9" y="459.9" width="3" height="3" fill="#b52a18"/>
<rect x="571.9" y="457.9" width="3" height="3" fill="#b52a18"/>
<rect x="569.9" y="462.3" width="3" height="3" fill="#b52a18"/>
<rect x="578.0" y="461.8" width="3" height="3" fill="#b52a18"/>
<rect x="587.6" y="459.9" width="3" height="3" fill="#b52a18"/>
<rect x="614.0" y="400.8" width="3" height="3" fill="#b52a18"/>
<rect x="626.9" y="399.8" width="3" height="3" fill="#b52a18"/>
<rect x="593.9" y="409.8" width="3" height="3" fill="#b52a18"/>
<rect x="589.8" y="412.3" width="3" height="3" fill="#b52a18"/>
<rect x="591.0" y="414.8" width="3" height="3" fill="#b52a18"/>
<rect x="593.9" y="417.0" width="3" height="3" fill="#b52a18"/>
<rect x="601.9" y="414.8" width="3" height="3" fill="#b52a18"/>
<rect x="611.0" y="414.8" width="3" height="3" fill="#b52a18"/>
<rect x="617.0" y="414.8" width="3" height="3" fill="#b52a18"/>
<rect x="625.9" y="417.8" width="3" height="3" fill="#b52a18"/>
<rect x="614.0" y="425.9" width="3" height="3" fill="#b52a18"/>
<rect x="624.9" y="423.9" width="3" height="3" fill="#b52a18"/>
<rect x="632.9" y="420.9" width="3" height="3" fill="#b52a18"/>
<rect x="638.1" y="419.8" width="3" height="3" fill="#b52a18"/>
<rect x="641.1" y="417.8" width="3" height="3" fill="#b52a18"/>
<rect x="643.7" y="419.2" width="3" height="3" fill="#b52a18"/>
<rect x="642.5" y="423.6" width="3" height="3" fill="#b52a18"/>
<rect x="635.9" y="425.9" width="3" height="3" fill="#b52a18"/>
<rect x="632.4" y="423.6" width="3" height="3" fill="#b52a18"/>
<rect x="629.9" y="425.9" width="3" height="3" fill="#b52a18"/>
<rect x="628.0" y="426.4" width="3" height="3" fill="#b52a18"/>
<rect x="624.9" y="429.9" width="3" height="3" fill="#b52a18"/>
<rect x="622.9" y="429.9" width="3" height="3" fill="#b52a18"/>
<rect x="621.9" y="433.9" width="3" height="3" fill="#b52a18"/>
<rect x="621.9" y="438.9" width="3" height="3" fill="#b52a18"/>
<rect x="614.8" y="430.9" width="3" height="3" fill="#b52a18"/>
<rect x="617.0" y="434.9" width="3" height="3" fill="#b52a18"/>
<rect x="614.8" y="436.2" width="3" height="3" fill="#b52a18"/>
<rect x="612.0" y="433.9" width="3" height="3" fill="#b52a18"/>
<rect x="609.0" y="434.9" width="3" height="3" fill="#b52a18"/>
<rect x="606.1" y="433.0" width="3" height="3" fill="#b52a18"/>
<rect x="607.9" y="438.9" width="3" height="3" fill="#b52a18"/>
<rect x="604.9" y="441.8" width="3" height="3" fill="#b52a18"/>
<rect x="614.8" y="439.9" width="3" height="3" fill="#b52a18"/>
<rect x="592.9" y="432.9" width="3" height="3" fill="#b52a18"/>
<rect x="591.9" y="450.8" width="3" height="3" fill="#b52a18"/>
<rect x="602.9" y="449.8" width="3" height="3" fill="#b52a18"/>
<rect x="610.0" y="454.9" width="3" height="3" fill="#b52a18"/>
<rect x="594.9" y="462.1" width="3" height="3" fill="#b52a18"/>
<rect x="602.9" y="462.3" width="3" height="3" fill="#b52a18"/>
<rect x="588.5" y="460.0" width="3" height="3" fill="#b52a18"/>
<rect x="510.0" y="391.9" width="3" height="3" fill="#b52a18"/>
<rect x="528.0" y="381.8" width="3" height="3" fill="#b52a18"/>
<rect x="642.1" y="391.9" width="3" height="3" fill="#b52a18"/>
<rect x="418.2" y="357.9" width="2.4" height="2.4" fill="#7a4408"/>
<rect x="431.2" y="369.1" width="2.4" height="2.4" fill="#7a4408"/>
<rect x="478.1" y="372.1" width="2.4" height="2.4" fill="#7a4408"/>
<rect x="455.3" y="392.2" width="2.4" height="2.4" fill="#7a4408"/>
<rect x="375.2" y="349.3" width="2.4" height="2.4" fill="#7a4408"/>
<rect x="371.3" y="365.1" width="2.4" height="2.4" fill="#7a4408"/>
<text x="126.8" y="448.6" font-family="Liberation Sans, Arial, sans-serif" font-weight="bold" font-style="italic" font-size="18" fill="#10131a" stroke="#10131a" stroke-width="1.1" textLength="49.5" lengthAdjust="spacingAndGlyphs">JMap</text></svg>
</div>
<div class="tw">
<table>
<colgroup><col style="width:99px"><col style="width:99px"><col style="width:99px"><col style="width:99px"><col style="width:99px"><col style="width:100px"><col style="width:98px"><col style="width:101px"></colgroup>
<tr><th>COUNTRY</th><th>CAPITAL</th><th>CONTINENT</th><th>CODE</th><th>FIPS</th><th>POP_GRW_RT</th><th>POP_15_64</th><th>LITERACY</th></tr>
<tr class="odd"><td>United States</td><td>Washington, D.C.</td><td>North America</td><td>840.0</td><td>US</td><td>0.8</td><td>168363628</td><td>97.0</td></tr>
<tr><td>Canada</td><td>Ottawa</td><td>North America</td><td>124.0</td><td>CA</td><td>1.1</td><td>18448785</td><td>99.0</td></tr>
</table>
</div>
<div class="c1"></div><div class="c2"></div>
</body>
</html>
